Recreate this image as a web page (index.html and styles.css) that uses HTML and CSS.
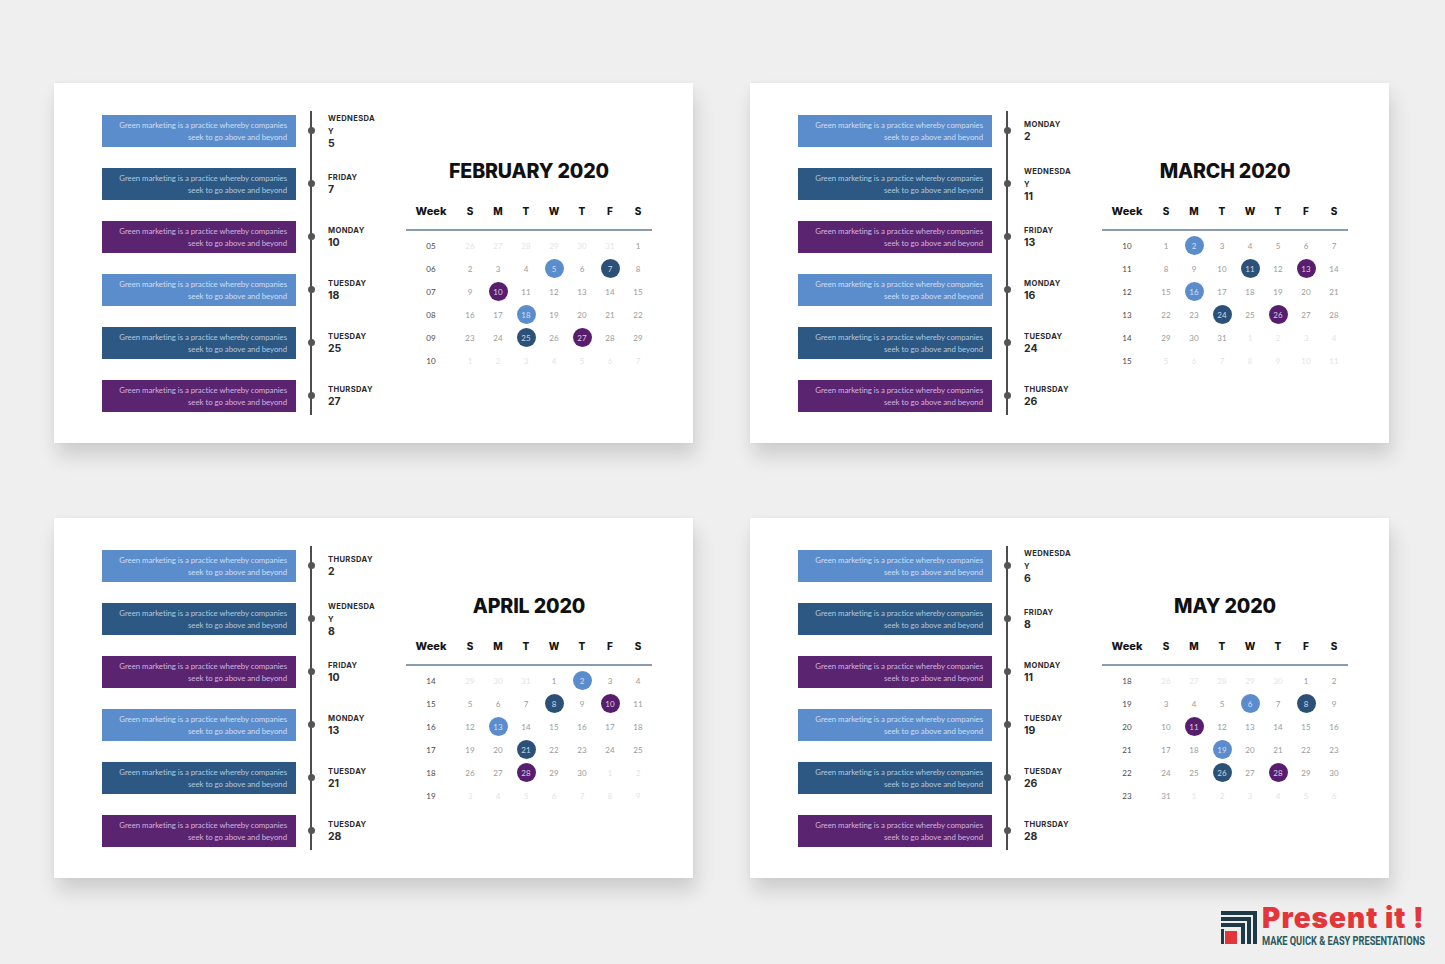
FILE: index.html
```html
<!DOCTYPE html>
<html lang="en">
<head>
<meta charset="utf-8">
<title>Calendar timeline slides</title>
<link rel="stylesheet" href="styles.css">
</head>
<body>
<main class="page">
  <div class="grid">

    <!-- FEBRUARY -->
    <section class="card">
      <div class="timeline">
        <div class="bar b1">Green marketing is a practice whereby companies<br>seek to go above and beyond</div><span class="dot"></span><div class="label"><span class="dname">WEDNESDAY</span><span class="dnum">5</span></div>
        <div class="bar b2">Green marketing is a practice whereby companies<br>seek to go above and beyond</div><span class="dot"></span><div class="label"><span class="dname">FRIDAY</span><span class="dnum">7</span></div>
        <div class="bar b3">Green marketing is a practice whereby companies<br>seek to go above and beyond</div><span class="dot"></span><div class="label"><span class="dname">MONDAY</span><span class="dnum">10</span></div>
        <div class="bar b1">Green marketing is a practice whereby companies<br>seek to go above and beyond</div><span class="dot"></span><div class="label"><span class="dname">TUESDAY</span><span class="dnum">18</span></div>
        <div class="bar b2">Green marketing is a practice whereby companies<br>seek to go above and beyond</div><span class="dot"></span><div class="label"><span class="dname">TUESDAY</span><span class="dnum">25</span></div>
        <div class="bar b3">Green marketing is a practice whereby companies<br>seek to go above and beyond</div><span class="dot"></span><div class="label"><span class="dname">THURSDAY</span><span class="dnum">27</span></div>
      </div>
      <div class="cal">
        <h2 class="cal-title">FEBRUARY 2020</h2>
        <div class="cal-head"><span class="wk-h">Week</span><span>S</span><span>M</span><span>T</span><span>W</span><span>T</span><span>F</span><span>S</span></div>
        <div class="cal-body">
          <div class="cal-row"><span class="wk">05</span><span class="o">26</span><span class="o">27</span><span class="o">28</span><span class="o">29</span><span class="o">30</span><span class="o">31</span><span>1</span></div>
          <div class="cal-row"><span class="wk">06</span><span>2</span><span>3</span><span>4</span><span><i class="c c1">5</i></span><span>6</span><span><i class="c c2">7</i></span><span>8</span></div>
          <div class="cal-row"><span class="wk">07</span><span>9</span><span><i class="c c3">10</i></span><span>11</span><span>12</span><span>13</span><span>14</span><span>15</span></div>
          <div class="cal-row"><span class="wk">08</span><span>16</span><span>17</span><span><i class="c c1">18</i></span><span>19</span><span>20</span><span>21</span><span>22</span></div>
          <div class="cal-row"><span class="wk">09</span><span>23</span><span>24</span><span><i class="c c2">25</i></span><span>26</span><span><i class="c c3">27</i></span><span>28</span><span>29</span></div>
          <div class="cal-row"><span class="wk">10</span><span class="o">1</span><span class="o">2</span><span class="o">3</span><span class="o">4</span><span class="o">5</span><span class="o">6</span><span class="o">7</span></div>
        </div>
      </div>
    </section>

    <!-- MARCH -->
    <section class="card">
      <div class="timeline">
        <div class="bar b1">Green marketing is a practice whereby companies<br>seek to go above and beyond</div><span class="dot"></span><div class="label"><span class="dname">MONDAY</span><span class="dnum">2</span></div>
        <div class="bar b2">Green marketing is a practice whereby companies<br>seek to go above and beyond</div><span class="dot"></span><div class="label"><span class="dname">WEDNESDAY</span><span class="dnum">11</span></div>
        <div class="bar b3">Green marketing is a practice whereby companies<br>seek to go above and beyond</div><span class="dot"></span><div class="label"><span class="dname">FRIDAY</span><span class="dnum">13</span></div>
        <div class="bar b1">Green marketing is a practice whereby companies<br>seek to go above and beyond</div><span class="dot"></span><div class="label"><span class="dname">MONDAY</span><span class="dnum">16</span></div>
        <div class="bar b2">Green marketing is a practice whereby companies<br>seek to go above and beyond</div><span class="dot"></span><div class="label"><span class="dname">TUESDAY</span><span class="dnum">24</span></div>
        <div class="bar b3">Green marketing is a practice whereby companies<br>seek to go above and beyond</div><span class="dot"></span><div class="label"><span class="dname">THURSDAY</span><span class="dnum">26</span></div>
      </div>
      <div class="cal">
        <h2 class="cal-title">MARCH 2020</h2>
        <div class="cal-head"><span class="wk-h">Week</span><span>S</span><span>M</span><span>T</span><span>W</span><span>T</span><span>F</span><span>S</span></div>
        <div class="cal-body">
          <div class="cal-row"><span class="wk">10</span><span>1</span><span><i class="c c1">2</i></span><span>3</span><span>4</span><span>5</span><span>6</span><span>7</span></div>
          <div class="cal-row"><span class="wk">11</span><span>8</span><span>9</span><span>10</span><span><i class="c c2">11</i></span><span>12</span><span><i class="c c3">13</i></span><span>14</span></div>
          <div class="cal-row"><span class="wk">12</span><span>15</span><span><i class="c c1">16</i></span><span>17</span><span>18</span><span>19</span><span>20</span><span>21</span></div>
          <div class="cal-row"><span class="wk">13</span><span>22</span><span>23</span><span><i class="c c2">24</i></span><span>25</span><span><i class="c c3">26</i></span><span>27</span><span>28</span></div>
          <div class="cal-row"><span class="wk">14</span><span>29</span><span>30</span><span>31</span><span class="o">1</span><span class="o">2</span><span class="o">3</span><span class="o">4</span></div>
          <div class="cal-row"><span class="wk">15</span><span class="o">5</span><span class="o">6</span><span class="o">7</span><span class="o">8</span><span class="o">9</span><span class="o">10</span><span class="o">11</span></div>
        </div>
      </div>
    </section>

    <!-- APRIL -->
    <section class="card">
      <div class="timeline">
        <div class="bar b1">Green marketing is a practice whereby companies<br>seek to go above and beyond</div><span class="dot"></span><div class="label"><span class="dname">THURSDAY</span><span class="dnum">2</span></div>
        <div class="bar b2">Green marketing is a practice whereby companies<br>seek to go above and beyond</div><span class="dot"></span><div class="label"><span class="dname">WEDNESDAY</span><span class="dnum">8</span></div>
        <div class="bar b3">Green marketing is a practice whereby companies<br>seek to go above and beyond</div><span class="dot"></span><div class="label"><span class="dname">FRIDAY</span><span class="dnum">10</span></div>
        <div class="bar b1">Green marketing is a practice whereby companies<br>seek to go above and beyond</div><span class="dot"></span><div class="label"><span class="dname">MONDAY</span><span class="dnum">13</span></div>
        <div class="bar b2">Green marketing is a practice whereby companies<br>seek to go above and beyond</div><span class="dot"></span><div class="label"><span class="dname">TUESDAY</span><span class="dnum">21</span></div>
        <div class="bar b3">Green marketing is a practice whereby companies<br>seek to go above and beyond</div><span class="dot"></span><div class="label"><span class="dname">TUESDAY</span><span class="dnum">28</span></div>
      </div>
      <div class="cal">
        <h2 class="cal-title">APRIL 2020</h2>
        <div class="cal-head"><span class="wk-h">Week</span><span>S</span><span>M</span><span>T</span><span>W</span><span>T</span><span>F</span><span>S</span></div>
        <div class="cal-body">
          <div class="cal-row"><span class="wk">14</span><span class="o">29</span><span class="o">30</span><span class="o">31</span><span>1</span><span><i class="c c1">2</i></span><span>3</span><span>4</span></div>
          <div class="cal-row"><span class="wk">15</span><span>5</span><span>6</span><span>7</span><span><i class="c c2">8</i></span><span>9</span><span><i class="c c3">10</i></span><span>11</span></div>
          <div class="cal-row"><span class="wk">16</span><span>12</span><span><i class="c c1">13</i></span><span>14</span><span>15</span><span>16</span><span>17</span><span>18</span></div>
          <div class="cal-row"><span class="wk">17</span><span>19</span><span>20</span><span><i class="c c2">21</i></span><span>22</span><span>23</span><span>24</span><span>25</span></div>
          <div class="cal-row"><span class="wk">18</span><span>26</span><span>27</span><span><i class="c c3">28</i></span><span>29</span><span>30</span><span class="o">1</span><span class="o">2</span></div>
          <div class="cal-row"><span class="wk">19</span><span class="o">3</span><span class="o">4</span><span class="o">5</span><span class="o">6</span><span class="o">7</span><span class="o">8</span><span class="o">9</span></div>
        </div>
      </div>
    </section>

    <!-- MAY -->
    <section class="card">
      <div class="timeline">
        <div class="bar b1">Green marketing is a practice whereby companies<br>seek to go above and beyond</div><span class="dot"></span><div class="label"><span class="dname">WEDNESDAY</span><span class="dnum">6</span></div>
        <div class="bar b2">Green marketing is a practice whereby companies<br>seek to go above and beyond</div><span class="dot"></span><div class="label"><span class="dname">FRIDAY</span><span class="dnum">8</span></div>
        <div class="bar b3">Green marketing is a practice whereby companies<br>seek to go above and beyond</div><span class="dot"></span><div class="label"><span class="dname">MONDAY</span><span class="dnum">11</span></div>
        <div class="bar b1">Green marketing is a practice whereby companies<br>seek to go above and beyond</div><span class="dot"></span><div class="label"><span class="dname">TUESDAY</span><span class="dnum">19</span></div>
        <div class="bar b2">Green marketing is a practice whereby companies<br>seek to go above and beyond</div><span class="dot"></span><div class="label"><span class="dname">TUESDAY</span><span class="dnum">26</span></div>
        <div class="bar b3">Green marketing is a practice whereby companies<br>seek to go above and beyond</div><span class="dot"></span><div class="label"><span class="dname">THURSDAY</span><span class="dnum">28</span></div>
      </div>
      <div class="cal">
        <h2 class="cal-title">MAY 2020</h2>
        <div class="cal-head"><span class="wk-h">Week</span><span>S</span><span>M</span><span>T</span><span>W</span><span>T</span><span>F</span><span>S</span></div>
        <div class="cal-body">
          <div class="cal-row"><span class="wk">18</span><span class="o">26</span><span class="o">27</span><span class="o">28</span><span class="o">29</span><span class="o">30</span><span>1</span><span>2</span></div>
          <div class="cal-row"><span class="wk">19</span><span>3</span><span>4</span><span>5</span><span><i class="c c1">6</i></span><span>7</span><span><i class="c c2">8</i></span><span>9</span></div>
          <div class="cal-row"><span class="wk">20</span><span>10</span><span><i class="c c3">11</i></span><span>12</span><span>13</span><span>14</span><span>15</span><span>16</span></div>
          <div class="cal-row"><span class="wk">21</span><span>17</span><span>18</span><span><i class="c c1">19</i></span><span>20</span><span>21</span><span>22</span><span>23</span></div>
          <div class="cal-row"><span class="wk">22</span><span>24</span><span>25</span><span><i class="c c2">26</i></span><span>27</span><span><i class="c c3">28</i></span><span>29</span><span>30</span></div>
          <div class="cal-row"><span class="wk">23</span><span>31</span><span class="o">1</span><span class="o">2</span><span class="o">3</span><span class="o">4</span><span class="o">5</span><span class="o">6</span></div>
        </div>
      </div>
    </section>

  </div>

  <footer class="brand">
    <svg class="brand-icon" width="36" height="33" viewBox="0 0 36 33" aria-hidden="true">
      <rect x="0" y="0" width="36" height="4" fill="#1d3a46"/>
      <rect x="32" y="0" width="4" height="33" fill="#1d3a46"/>
      <rect x="0" y="6" width="30" height="4" fill="#1d3a46"/>
      <rect x="26" y="6" width="4" height="27" fill="#1d3a46"/>
      <rect x="0" y="12" width="24" height="4" fill="#1d3a46"/>
      <rect x="20" y="12" width="4" height="21" fill="#1d3a46"/>
      <rect x="0" y="18" width="3" height="15" fill="#1d3a46"/>
      <rect x="4" y="20" width="12" height="13" fill="#e4353b"/>
    </svg>
    <div class="brand-text">
      <span class="brand-name">Present it !</span>
      <span class="brand-tag">MAKE QUICK &amp; EASY PRESENTATIONS</span>
    </div>
  </footer>
</main>
</body>
</html>
```

FILE: styles.css
```css
* { box-sizing: border-box; }

html, body {
  margin: 0;
  padding: 0;
  background: #efefef;
}

.page {
  width: 1445px;
  height: 964px;
  padding: 83px 0 0 54px;
  font-family: "Lato", "Open Sans", sans-serif;
}

.grid {
  display: grid;
  grid-template-columns: 639px 639px;
  grid-auto-rows: 360px;
  column-gap: 57px;
  row-gap: 75px;
}

.card {
  background: #ffffff;
  box-shadow: 3px 13px 18px rgba(0, 0, 0, 0.14), 0 0 4px rgba(0, 0, 0, 0.04);
  display: flex;
  align-items: flex-start;
  padding-left: 48px;
}

/* ---------- timeline ---------- */
.timeline {
  margin-top: 21px;
  display: grid;
  grid-template-columns: 194px 30px 50px;
  grid-auto-rows: 53px;
  align-items: center;
  background-image: linear-gradient(#4d4d4d, #4d4d4d);
  background-repeat: no-repeat;
  background-size: 2px calc(100% - 14px);
  background-position: 208px 7px;
}

.bar {
  height: 32px;
  padding-right: 9px;
  display: flex;
  align-items: center;
  justify-content: flex-end;
  text-align: right;
  font-family: "Lato", sans-serif;
  font-size: 7.85px;
  line-height: 12px;
  letter-spacing: -0.05px;
}
.b1 { background: #5b8dcd; color: rgba(232, 240, 252, 0.82); }
.b2 { background: #2d5883; color: rgba(210, 224, 240, 0.82); }
.b3 { background: #5a2471; color: rgba(236, 214, 244, 0.82); }

.dot {
  justify-self: center;
  width: 7px;
  height: 7px;
  border-radius: 50%;
  background: #555555;
  margin-left: 1px;
}

.label {
  padding-left: 2px;
  display: flex;
  flex-direction: column;
  color: #2b2b2b;
  font-family: "Inter", "DejaVu Sans", sans-serif;
  font-weight: 700;
}
.dname {
  font-size: 7.6px;
  line-height: 13px;
  letter-spacing: 0.35px;
  word-break: break-all;
  width: 48px;
}
.dnum {
  font-size: 10.5px;
  line-height: 12px;
}

/* ---------- calendar ---------- */
.cal {
  width: 246px;
  margin-left: 30px;
  margin-top: 76px;
}

.cal-title {
  margin: 0;
  text-align: center;
  font-family: "Inter", sans-serif;
  font-weight: 800;
  font-size: 19.6px;
  line-height: 24px;
  color: #111111;
  letter-spacing: -0.15px;
}

.cal-head,
.cal-row {
  display: grid;
  grid-template-columns: 50px repeat(7, 28px);
  align-items: center;
  justify-items: center;
}

.cal-head {
  margin-top: 18px;
  height: 30px;
  padding-bottom: 8px;
  border-bottom: 2px solid #8a9db0;
  font-family: "Inter", sans-serif;
  font-weight: 800;
  font-size: 10px;
  color: #151515;
}
.wk-h { font-size: 11px; }

.cal-body { padding-top: 3px; }

.cal-row {
  height: 23px;
  font-family: "Lato", sans-serif;
  font-size: 8px;
  color: #9a9a9a;
}
.cal-row > span {
  display: flex;
  align-items: center;
  justify-content: center;
}
.cal-row .wk { color: #4a4a4a; }
.cal-row .o { color: #e4e4e4; }

.c {
  font-style: normal;
  width: 19px;
  height: 19px;
  border-radius: 50%;
  display: flex;
  align-items: center;
  justify-content: center;
  color: rgba(235, 240, 250, 0.85);
}
.c1 { background: #5b8dcd; }
.c2 { background: #2b5179; }
.c3 { background: #581d6c; }

/* ---------- brand ---------- */
.brand {
  margin-top: 27px;
  display: flex;
  justify-content: flex-end;
  align-items: flex-end;
  padding-right: 18px;
  gap: 5px;
}
.brand-icon { margin-bottom: 3px; }
.brand-text {
  display: flex;
  flex-direction: column;
  width: 165px;
}
.brand-name {
  font-family: "Inter", sans-serif;
  font-weight: 900;
  font-size: 28px;
  line-height: 27px;
  color: #e4353b;
  letter-spacing: 1px;
  white-space: nowrap;
}
.brand-tag {
  display: inline-block;
  margin-top: 3px;
  font-family: "Roboto", sans-serif;
  font-weight: 700;
  font-size: 12px;
  line-height: 12px;
  color: #2a5a5e;
  white-space: nowrap;
  transform: scaleX(0.77);
  transform-origin: left center;
}
```
